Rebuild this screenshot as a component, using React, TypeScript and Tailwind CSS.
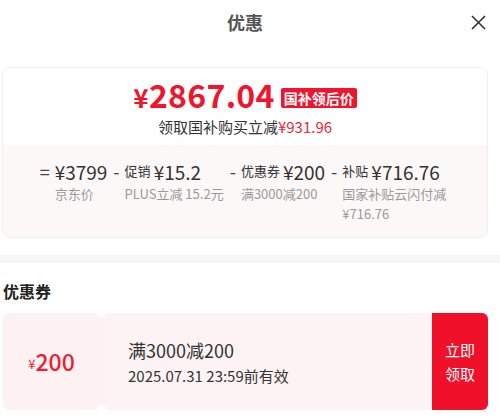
const breakdown = [
    { op: '=', tag: '', amount: '¥3799', label: ['京东价'] },
    { op: '-', tag: '促销', amount: '¥15.2', label: ['PLUS立减 15.2元'] },
    { op: '-', tag: '优惠券', amount: '¥200', label: ['满3000减200'] },
    { op: '-', tag: '补贴', amount: '¥716.76', label: ['国家补贴云闪付减', '¥716.76'] },
]

export default function App() {
    return (
        <div className="w-[500px] h-[418px] bg-white overflow-hidden font-['Noto_Sans_CJK_SC','Noto_Sans',sans-serif]">
            {/* header */}
            <div className="relative h-[44px] flex items-center justify-center pr-[10px]">
                <span className="text-[18px] font-bold text-[#555] leading-none">优惠</span>
                <svg className="absolute right-[14px] top-[15px]" width="15" height="15" viewBox="0 0 15 15">
                    <path d="M1 1 L14 14 M14 1 L1 14" stroke="#333" strokeWidth="1.6" />
                </svg>
            </div>

            {/* price card */}
            <div className="mt-[23px] ml-[2px] w-[486px] h-[171px] rounded-[8px] border border-[#f0eeee] overflow-hidden flex flex-col">
                <div className="h-[77px] bg-white flex flex-col items-center pt-[14px]">
                    <div className="flex items-center gap-[6px] h-[30px]">
                        <span className="text-[#f0142d] font-semibold leading-[30px] tracking-[0.3px]">
                            <span className="text-[26px]">¥</span>
                            <span className="text-[32px]">2867.04</span>
                        </span>
                        <span className="bg-[#f0142d] text-white text-[14px] font-bold leading-none px-[3px] py-[3px] rounded-[2px] mt-[2px]">国补领后价</span>
                    </div>
                    <div className="mt-[7px] text-[15px] leading-[16px] text-[#333]">
                        领取国补购买立减<span className="text-[#e8283c]">¥931.96</span>
                    </div>
                </div>
                <div className="flex-1 bg-[#fdf8f8] flex justify-center pt-[13px] pr-[4px] gap-[6px]">
                    {breakdown.map((b, i) => (
                        <div key={i} className="flex items-start">
                            <span className="text-[18px] text-[#444] leading-[26px] mr-[5px]">{b.op}</span>
                            <div className="flex flex-col">
                                <div className="flex items-center gap-[3px] h-[26px] text-[#333]">
                                    {b.tag && <span className="text-[13px]">{b.tag}</span>}
                                    <span className="text-[19px] leading-none">{b.amount}</span>
                                </div>
                                <div className="text-[13px] leading-[20px] text-[#999]">
                                    {b.label.map((l) => (
                                        <div key={l}>{l}</div>
                                    ))}
                                </div>
                            </div>
                        </div>
                    ))}
                </div>
            </div>

            {/* divider */}
            <div className="mt-[17px] h-[8px] bg-[#f6f6f9]" />

            {/* coupons */}
            <div className="mt-[20px] ml-[3px] text-[16px] font-bold text-[#222] leading-none">优惠券</div>
            <div className="mt-[14px] ml-[3px] w-[485px] h-[97px] flex">
                <div className="relative w-[97px] rounded-l-[6px] bg-[#fdf1f2] flex items-center justify-center text-[#ec1d35]">
                    <span className="text-[13px] mt-[4px]">¥</span>
                    <span className="text-[23px] font-medium leading-none">200</span>
                </div>
                <div className="relative w-[3px] bg-[#fdf1f2]">
                    <span className="absolute -top-[4px] -left-[3px] w-[9px] h-[9px] rounded-full bg-white" />
                    <span className="absolute -bottom-[4px] -left-[3px] w-[9px] h-[9px] rounded-full bg-white" />
                </div>
                <div className="flex-1 bg-[#fdf3f4] flex flex-col justify-center pl-[25px] text-[#333]">
                    <div className="text-[18px] leading-none">满3000减200</div>
                    <div className="mt-[9px] text-[15px] leading-none">2025.07.31 23:59前有效</div>
                </div>
                <div className="w-[56px] rounded-r-[6px] bg-[#f0102a] flex flex-col items-center justify-center text-white text-[15px] leading-[24px]">
                    <span>立即</span>
                    <span>领取</span>
                </div>
            </div>
        </div>
    )
}
